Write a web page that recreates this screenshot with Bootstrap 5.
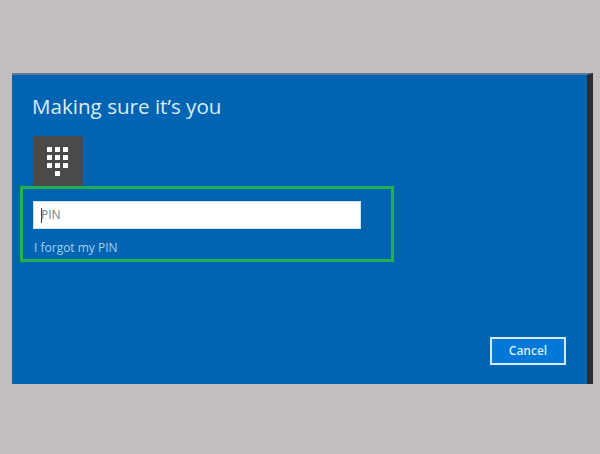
<!DOCTYPE html>
<html lang="en">
<head>
  <meta charset="UTF-8" />
  <title>Making sure it's you</title>
  <link href="https://cdn.jsdelivr.net/npm/bootstrap@5.3.0/dist/css/bootstrap.min.css" rel="stylesheet" />
  <style>
    html, body {
      height: 100%;
    }
    body {
      background: #c1bebd;
      font-family: "Open Sans", "Liberation Sans", sans-serif;
      padding: 73px 7px 70px 12px;
    }
    .pin-dialog {
      height: 311px;
      background: #0064b3;
      border-top: 2px solid #5a7a96;
      border-right: 6px solid #2a2c30;
      padding: 0 21px 19px 8px;
    }
    .dialog-title {
      color: #dcecf6;
      font-size: 20.6px;
      font-weight: 400;
      line-height: 27px;
      margin: 18px 0 16px 12px;
    }
    .pin-tile {
      width: 50px;
      height: 50px;
      background: #4a4a4a;
      margin-left: 13px;
    }
    .highlight-box {
      width: 374px;
      height: 76px;
      border: 3px solid #1db14f;
      padding: 12px 10px 0;
    }
    .pin-field {
      width: 328px;
      height: 28px;
      background: #fff;
      border: 1px solid #cfe2f2;
      padding-left: 7px;
      color: #7c7c7c;
      font-size: 12px;
    }
    .pin-caret {
      width: 1px;
      height: 15px;
      background: #444;
      margin-right: -1px;
    }
    .forgot-link {
      color: #a9d2ee;
      font-size: 12px;
      margin: 10px 0 0 1px;
      text-decoration: none;
    }
    .cancel-btn {
      width: 76px;
      height: 28px;
      background: #0078d7;
      border: 2px solid #d3ecf7;
      border-radius: 0;
      color: #dcecf6;
      font-size: 12px;
      font-weight: 600;
      padding: 0;
    }
  </style>
</head>
<body>
  <div class="pin-dialog d-flex flex-column">
    <h1 class="dialog-title">Making sure it’s you</h1>
    <div class="pin-tile d-flex align-items-center justify-content-center">
      <svg width="24" height="31" viewBox="0 0 24 31" fill="#fff">
        <rect x="1" y="1" width="5" height="5"/><rect x="9" y="1" width="5" height="5"/><rect x="17" y="1" width="5" height="5"/>
        <rect x="1" y="9" width="5" height="5"/><rect x="9" y="9" width="5" height="5"/><rect x="17" y="9" width="5" height="5"/>
        <rect x="1" y="17" width="5" height="5"/><rect x="9" y="17" width="5" height="5"/><rect x="17" y="17" width="5" height="5"/>
        <rect x="9" y="25" width="5" height="5"/>
      </svg>
    </div>
    <div class="highlight-box">
      <div class="pin-field d-flex align-items-center"><span class="pin-caret"></span>PIN</div>
      <a class="forgot-link d-block" href="#">I forgot my PIN</a>
    </div>
    <div class="mt-auto align-self-end">
      <button type="button" class="btn cancel-btn">Cancel</button>
    </div>
  </div>
  <script src="https://cdn.jsdelivr.net/npm/bootstrap@5.3.0/dist/js/bootstrap.bundle.min.js"></script>
</body>
</html>
